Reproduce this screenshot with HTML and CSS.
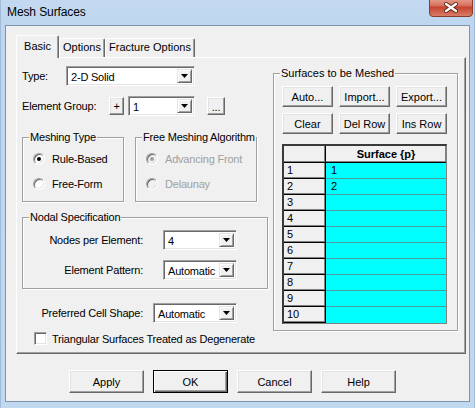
FILE: index.html
```html
<!DOCTYPE html>
<html>
<head>
<meta charset="utf-8">
<title>Mesh Surfaces</title>
<link rel="stylesheet" href="styles.css">
</head>
<body>
<div class="window">
  <div class="titlebar">
    <span class="title">Mesh Surfaces</span>
    <div class="close">
      <svg width="44" height="17" viewBox="0 0 44 17">
        <defs>
          <linearGradient id="cg" x1="0" y1="0" x2="0" y2="1">
            <stop offset="0" stop-color="#eab0a2"/>
            <stop offset="0.45" stop-color="#d77562"/>
            <stop offset="0.55" stop-color="#c5442f"/>
            <stop offset="1" stop-color="#d9806c"/>
          </linearGradient>
        </defs>
        <rect x="0.5" y="-4" width="43" height="20.5" rx="3.5" fill="url(#cg)" stroke="#8a3a2c"/>
        <path d="M17 4 L27 11 M27 4 L17 11" stroke="#5e241a" stroke-width="4" stroke-linecap="round"/>
        <path d="M17 4 L27 11 M27 4 L17 11" stroke="#ffffff" stroke-width="2.2" stroke-linecap="round"/>
      </svg>
    </div>
  </div>
  <div class="client">
    <div class="tabs">
      <div class="tab active t-basic">Basic</div>
      <div class="tab t-options">Options</div>
      <div class="tab t-frac">Fracture Options</div>
    </div>
    <div class="panel">
      <div class="left">
        <div class="row type-row">
          <span class="lbl">Type:</span>
          <div class="combo w-type"><span class="val">2-D Solid</span><span class="drop"></span></div>
        </div>
        <div class="row eg-row">
          <span class="lbl">Element Group:</span>
          <div class="btn plus">+</div>
          <div class="combo w-eg"><span class="val">1</span><span class="drop"></span></div>
          <div class="btn dots">...</div>
        </div>
        <div class="groups">
          <fieldset class="group mesh-type">
            <legend>Meshing Type</legend>
            <div class="radios">
              <div class="radio-row"><span class="radio on"></span><span>Rule-Based</span></div>
              <div class="radio-row"><span class="radio"></span><span>Free-Form</span></div>
            </div>
          </fieldset>
          <fieldset class="group free-mesh">
            <legend>Free Meshing Algorithm</legend>
            <div class="radios disabled">
              <div class="radio-row"><span class="radio on"></span><span>Advancing Front</span></div>
              <div class="radio-row"><span class="radio"></span><span>Delaunay</span></div>
            </div>
          </fieldset>
        </div>
        <fieldset class="group nodal">
          <legend>Nodal Specification</legend>
          <div class="nodal-body">
            <div class="row">
              <span class="nlbl">Nodes per Element:</span>
              <div class="combo w-n"><span class="val">4</span><span class="drop"></span></div>
            </div>
            <div class="row">
              <span class="nlbl">Element Pattern:</span>
              <div class="combo w-n"><span class="val">Automatic</span><span class="drop"></span></div>
            </div>
          </div>
        </fieldset>
        <div class="row pref-row">
          <span class="plbl">Preferred Cell Shape:</span>
          <div class="combo w-p"><span class="val">Automatic</span><span class="drop"></span></div>
        </div>
        <div class="chk-row">
          <span class="check"></span>
          <span>Triangular Surfaces Treated as Degenerate</span>
        </div>
      </div>
      <fieldset class="group surfaces">
        <legend>Surfaces to be Meshed</legend>
        <div class="surf-body">
          <div class="surf-btns">
            <div class="btn sb">Auto...</div>
            <div class="btn sb">Import...</div>
            <div class="btn sb">Export...</div>
            <div class="btn sb">Clear</div>
            <div class="btn sb">Del Row</div>
            <div class="btn sb">Ins Row</div>
          </div>
          <div class="grid">
            <div class="gh"></div><div class="gh ghd">Surface {p}</div>
            <div class="rn">1</div><div class="dc">1</div>
            <div class="rn">2</div><div class="dc">2</div>
            <div class="rn">3</div><div class="dc"></div>
            <div class="rn">4</div><div class="dc"></div>
            <div class="rn">5</div><div class="dc"></div>
            <div class="rn">6</div><div class="dc"></div>
            <div class="rn">7</div><div class="dc"></div>
            <div class="rn">8</div><div class="dc"></div>
            <div class="rn">9</div><div class="dc"></div>
            <div class="rn last">10</div><div class="dc last">&nbsp;</div>
          </div>
        </div>
      </fieldset>
    </div>
    <div class="actions">
      <div class="btn ab">Apply</div>
      <div class="btn ab default">OK</div>
      <div class="btn ab">Cancel</div>
      <div class="btn ab">Help</div>
    </div>
  </div>
</div>
</body>
</html>
```

FILE: styles.css
```css
* { box-sizing: border-box; }
html, body { margin: 0; padding: 0; }
body {
  width: 475px;
  height: 408px;
  overflow: hidden;
  font-family: "Liberation Sans", Arial, sans-serif;
  font-size: 11px;
  color: #000;
  background: #bcd4ee;
}
.window {
  width: 475px;
  height: 408px;
  display: flex;
  flex-direction: column;
  padding: 0 5px 6px 5px;
  background: linear-gradient(to bottom, #c3d9f1 0%, #bdd5ef 8%, #c1d8f1 100%);
  box-shadow: inset 1px 0 0 #9fbbd9, inset -1px 0 0 #9fbbd9;
}
.titlebar {
  height: 25px;
  display: flex;
  justify-content: space-between;
  align-items: flex-start;
}
.title {
  font-size: 12px;
  line-height: 13px;
  margin: 6px 0 0 2px;
  letter-spacing: -0.1px;
}
.close {
  width: 44px;
  height: 17px;
  margin-right: -3px;
  display: flex;
}
.client {
  flex: 1;
  background: #f0f0f0;
  border: 1px solid #7e93ad;
  padding: 9px 3px 0 10px;
  display: flex;
  flex-direction: column;
}

/* tabs */
.tabs {
  display: flex;
  align-items: flex-end;
  height: 22px;
}
.tab {
  height: 19px;
  padding-bottom: 2px;
  display: flex;
  align-items: center;
  justify-content: center;
  border-top: 1px solid #fff;
  border-left: 1px solid #fff;
  border-right: 1px solid #696969;
  box-shadow: inset -1px 0 0 #a0a0a0;
  border-radius: 2px 2px 0 0;
}
.tab.active {
  height: 23px;
  margin-bottom: -1px;
  padding-bottom: 3px;
  background: #f0f0f0;
  position: relative;
  z-index: 1;
}
.t-basic { width: 43px; }
.t-options { width: 46px; }
.t-frac { width: 90px; }

/* panel */
.panel {
  height: 297px;
  border: 1px solid;
  border-color: #fff #696969 #696969 #fff;
  box-shadow: inset -1px -1px 0 #a0a0a0;
  display: flex;
  align-items: flex-start;
  gap: 5px;
  padding: 0 7px 0 5px;
}
.left {
  width: 246px;
  padding-top: 8px;
  display: flex;
  flex-direction: column;
  letter-spacing: -0.2px;
}
.row {
  display: flex;
  align-items: center;
  height: 20px;
}
.type-row .lbl { width: 44px; }
.eg-row { margin-top: 10px; }
.eg-row .lbl { width: 87px; }

/* buttons */
.btn {
  display: flex;
  align-items: center;
  justify-content: center;
  background: #f0f0f0;
  border: 1px solid;
  border-color: #fff #696969 #696969 #fff;
  box-shadow: inset -1px -1px 0 #a0a0a0, inset 1px 1px 0 #e3e3e3;
}
.btn.default {
  border-color: #000;
  box-shadow: inset 1px 1px 0 #fff, inset -1px -1px 0 #696969, inset -2px -2px 0 #a0a0a0;
}
.plus { width: 15px; height: 18px; }
.dots { width: 18px; height: 18px; margin-left: 12px; padding-top: 1px; }

/* combo */
.combo {
  height: 20px;
  display: flex;
  align-items: stretch;
  background: #fff;
  border: 1px solid;
  border-color: #a0a0a0 #fff #fff #a0a0a0;
  box-shadow: inset 1px 1px 0 #696969, inset -1px -1px 0 #e3e3e3;
  padding: 2px;
}
.combo .val {
  flex: 1;
  padding-left: 2px;
  line-height: 16px;
  white-space: nowrap;
}
.combo .drop {
  width: 15px;
  background: #f0f0f0;
  border: 1px solid;
  border-color: #e3e3e3 #696969 #696969 #e3e3e3;
  box-shadow: inset 1px 1px 0 #fff, inset -1px -1px 0 #a0a0a0;
  display: flex;
  align-items: center;
  justify-content: center;
}
.combo .drop::after {
  content: "";
  width: 7px;
  height: 4px;
  background: #000;
  clip-path: polygon(0 0, 100% 0, 50% 100%);
}
.w-type { width: 129px; }
.w-eg { width: 67px; margin-left: 4px; }
.w-n { width: 74px; }
.w-p { width: 84px; }

/* group boxes */
.group {
  margin: 0;
  padding: 0;
  min-width: 0;
  border: 1px solid #a0a0a0;
  box-shadow: 1px 1px 0 #fff, inset 1px 1px 0 #fff;
}
.group legend {
  margin-left: 6px;
  padding: 0 1px;
  line-height: 13px;
  background: #f0f0f0;
}
.groups {
  display: flex;
  gap: 11px;
  margin-top: 15px;
}
.mesh-type { width: 102px; }
.free-mesh { width: 122px; }
.radios {
  display: flex;
  flex-direction: column;
  gap: 9px;
  padding: 7px 0 9px 10px;
}
.radio-row {
  display: flex;
  align-items: center;
  gap: 7px;
  height: 16px;
  white-space: nowrap;
}
.radio {
  width: 12px;
  height: 12px;
  flex: none;
  border-radius: 50%;
  background: #fff;
  border: 1px solid;
  border-color: #a0a0a0 #fff #fff #a0a0a0;
  box-shadow: inset 1px 1px 0 #696969, inset -1px -1px 0 #e3e3e3;
  display: flex;
  align-items: center;
  justify-content: center;
}
.radio.on::after {
  content: "";
  width: 4px;
  height: 4px;
  border-radius: 50%;
  background: #000;
}
.disabled { color: #a0a0a0; }
.disabled .radio { background: #f0f0f0; }
.disabled .radio.on::after { background: #a0a0a0; }

.group.nodal { margin-top: 9px; width: 246px; }
.nodal-body {
  display: flex;
  flex-direction: column;
  gap: 10px;
  padding: 6px 0 8px 0;
}
.nlbl {
  width: 120px;
  text-align: right;
  margin-right: 20px;
}
.pref-row { margin-top: 14px; }
.plbl {
  width: 121px;
  text-align: right;
  margin-right: 10px;
}
.chk-row {
  margin-top: 9px;
  display: flex;
  align-items: center;
  gap: 5px;
  padding-left: 12px;
  height: 13px;
  white-space: nowrap;
}
.check {
  width: 13px;
  height: 13px;
  flex: none;
  background: #fff;
  border: 1px solid;
  border-color: #a0a0a0 #fff #fff #a0a0a0;
  box-shadow: inset 1px 1px 0 #696969, inset -1px -1px 0 #e3e3e3;
}

/* surfaces */
.group.surfaces {
  width: 185px;
  margin-top: 9px;
}
.surf-body {
  padding: 6px 0 6px 8px;
}
.surf-btns {
  display: grid;
  grid-template-columns: repeat(3, 51px);
  grid-auto-rows: 21px;
  gap: 6px;
}
.grid {
  margin-top: 10px;
  width: 165px;
  height: 180px;
  display: grid;
  grid-template-columns: 42px 120px;
  grid-template-rows: 17px repeat(10, 16px);
  border-style: solid;
  border-width: 2px 1px 1px 2px;
  border-color: #3a3a3a #808080 #808080 #3a3a3a;
  font-size: 11px;
}
.gh {
  background: #f0f0f0;
  border-right: 1px solid #000;
  border-bottom: 1px solid #000;
  box-shadow: inset -1px -1px 0 #808080;
}
.ghd {
  border-right: none;
  font-weight: bold;
  text-align: center;
  line-height: 15px;
  padding-top: 1px;
}
.rn {
  background: #f0f0f0;
  border-right: 1px solid #000;
  border-bottom: 1px solid #000;
  box-shadow: inset -1px -1px 0 #808080;
  padding-left: 3px;
  line-height: 15px;
}
.dc {
  background: #00ffff;
  border-bottom: 1px solid #4a9c9c;
  padding-left: 5px;
  line-height: 15px;
}
.dc.last { border-bottom: none; }

/* bottom actions */
.actions {
  display: flex;
  gap: 9px;
  margin-top: 16px;
  padding-left: 53px;
}
.ab { width: 75px; height: 23px; }
```
